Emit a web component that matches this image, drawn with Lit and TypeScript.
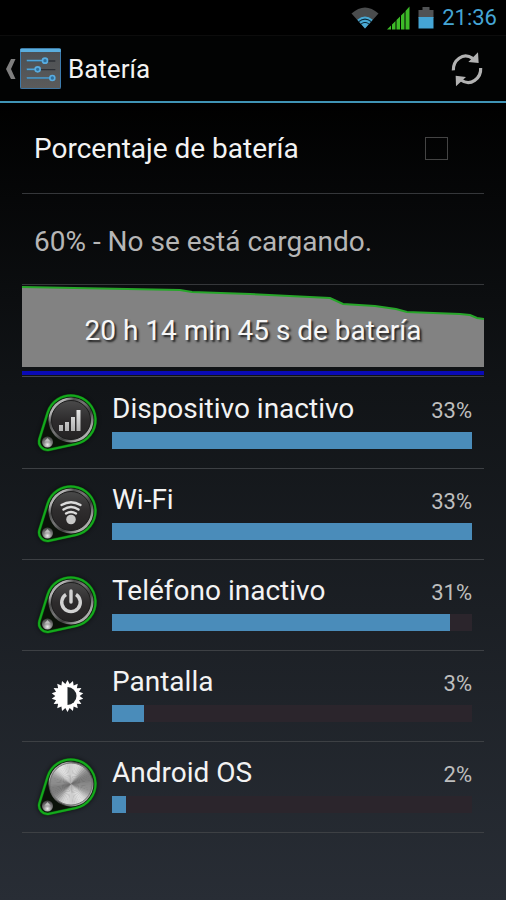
import { LitElement, html, svg, css, type SVGTemplateResult } from "lit";
import { customElement, property } from "lit/decorators.js";

type Glyph = "signal" | "wifi" | "power" | "metal";

interface Usage {
  name: string;
  percent: number;
  fill: number;
  icon: Glyph | "brightness";
}

const USAGES: Usage[] = [
  { name: "Dispositivo inactivo", percent: 33, fill: 100, icon: "signal" },
  { name: "Wi-Fi", percent: 33, fill: 100, icon: "wifi" },
  { name: "Teléfono inactivo", percent: 31, fill: 94, icon: "power" },
  { name: "Pantalla", percent: 3, fill: 9, icon: "brightness" },
  { name: "Android OS", percent: 2, fill: 4, icon: "metal" },
];

/** Thin wedges whose brightness varies with the angle, like brushed steel. */
function brushedDisc(cx: number, cy: number, r: number): SVGTemplateResult[] {
  const count = 60;
  const step = (Math.PI * 2) / count;
  return Array.from({ length: count }, (_, i) => {
    const a = i * step;
    const b = a + step * 1.3;
    const shine = Math.pow(Math.abs(Math.sin(a + 0.25)), 1.2);
    const ripple = Math.cos(a * 6 + 1) * 14;
    const v = Math.round(112 + shine * 108 + ripple);
    const d = `M${cx} ${cy}L${cx + r * Math.cos(a)} ${cy + r * Math.sin(a)}A${r} ${r} 0 0 1 ${cx + r * Math.cos(b)} ${cy + r * Math.sin(b)}Z`;
    return svg`<path d=${d} fill="rgb(${v},${v},${v})" />`;
  });
}

function toothedDisc(cx: number, cy: number, inner: number, outer: number, teeth: number): string {
  const pts: string[] = [];
  for (let i = 0; i < teeth * 2; i++) {
    const a = (i * Math.PI) / teeth - Math.PI / 2;
    const r = i % 2 ? inner : outer;
    pts.push(`${(cx + r * Math.cos(a)).toFixed(2)},${(cy + r * Math.sin(a)).toFixed(2)}`);
  }
  return pts.join(" ");
}

@customElement("usage-icon")
class UsageIcon extends LitElement {
  @property() kind: Usage["icon"] = "signal";

  static styles = css`
    :host {
      display: block;
      width: 60px;
      height: 60px;
    }
    .art {
      display: block;
      width: 100%;
      height: 100%;
      overflow: visible;
    }
  `;

  private glyph() {
    switch (this.kind) {
      case "signal":
        return svg`<path fill="url(#glyph)" d="M21 32h4v6h-4zM27 29h4v9h-4zM33 24h4v14h-4zM38.500 17h4v21h-4z" />`;
      case "wifi":
        return svg`
          <circle cx="33" cy="35.500" r="4.800" fill="#c8c8c8" />
          <g fill="none" stroke="#dcdcdc" stroke-width="2.400" stroke-linecap="round">
            <path d="M23.500 21Q33 15.500 42.500 21" />
            <path d="M25.500 25.500Q33 20.500 40.500 25.500" />
            <path d="M28 29.500Q33 26.500 38 29.500" />
          </g>`;
      case "power":
        return svg`
          <g fill="none" stroke="#d2d2d2" stroke-width="3.400">
            <path d="M28 19.500A9.300 9.300 0 1 0 38 19.500" />
            <path d="M33 16V27" stroke-linecap="round" />
          </g>`;
      default:
        return svg`${brushedDisc(33, 27, 21)}<circle cx="33" cy="27" r="21" fill="none" stroke="#777" stroke-width="1" />`;
    }
  }

  render() {
    if (this.kind === "brightness") {
      return html`<svg class="art" viewBox="0 0 60 60" aria-hidden="true">
        <polygon points=${toothedDisc(29.5, 30, 12.2, 16, 18)} fill="#fff" />
        <path d="M29.500 21A9 9 0 0 1 29.500 39Z" fill="#20262a" />
      </svg>`;
    }
    return html`<svg class="art" viewBox="0 0 60 60" aria-hidden="true">
      <defs>
        <linearGradient id="ring" x1="0" y1="0" x2="1" y2="1">
          <stop offset="0" stop-color="#8c8c8c" />
          <stop offset="0.2" stop-color="#b4b4b4" />
          <stop offset="0.3" stop-color="#4c4c4c" />
          <stop offset="0.45" stop-color="#777" />
          <stop offset="0.62" stop-color="#3c3c3c" />
          <stop offset="0.8" stop-color="#a8a8a8" />
          <stop offset="1" stop-color="#c0c0c0" />
        </linearGradient>
        <linearGradient id="face" x1="0" y1="0" x2="0" y2="1">
          <stop offset="0" stop-color="#4a4a4a" />
          <stop offset="0.5" stop-color="#2e2c2d" />
          <stop offset="1" stop-color="#242223" />
        </linearGradient>
        <linearGradient id="glyph" x1="0" y1="0" x2="0" y2="1">
          <stop offset="0" stop-color="#e6e6e6" />
          <stop offset="1" stop-color="#b0b0b0" />
        </linearGradient>
        <radialGradient id="bead" cx="0.5" cy="0.75" r="0.7">
          <stop offset="0" stop-color="#f0f0f0" />
          <stop offset="0.5" stop-color="#8a8a8a" />
          <stop offset="1" stop-color="#444" />
        </radialGradient>
        <filter id="soft" x="-20%" y="-20%" width="140%" height="140%">
          <feGaussianBlur stdDeviation="2" />
        </filter>
      </defs>
      <path
        d="M9.600 19.700A24.500 24.500 0 1 1 38.200 50.900L11.300 56.800A8.500 8.500 0 0 1 1.400 46Z"
        fill="#000"
        opacity="0.6"
        filter="url(#soft)"
        stroke="#000"
        stroke-width="3"
      />
      <path
        d="M9.600 19.700A24.500 24.500 0 1 1 38.200 50.900L11.300 56.800A8.500 8.500 0 0 1 1.400 46Z"
        fill="#0b1209"
        stroke="#0d5a12"
        stroke-width="3"
      />
      <path
        d="M9.600 19.700A24.500 24.500 0 1 1 38.200 50.900L11.300 56.800A8.500 8.500 0 0 1 1.400 46Z"
        fill="none"
        stroke="#14aa1c"
        stroke-width="2"
      />
      <circle cx="33" cy="27" r="22.500" fill="url(#ring)" />
      <circle cx="33" cy="27" r="19.500" fill="url(#face)" stroke="#1c1c1c" stroke-width="1" />
      ${this.glyph()}
      <circle cx="9.500" cy="49" r="5.500" fill="url(#bead)" />
      <path d="M6.500 48.500H12.500L9.500 45Z" fill="#d8d8d8" opacity="0.7" />
    </svg>`;
  }
}

@customElement("usage-row")
class UsageRow extends LitElement {
  @property({ attribute: false }) usage!: Usage;

  static styles = css`
    :host {
      display: flex;
      align-items: flex-start;
      box-sizing: border-box;
      height: 91px;
      padding: 15px 12px 0 16px;
      border-bottom: 1px solid #3d4044;
    }
    .body {
      flex: 1;
      margin-left: 14px;
    }
    .line {
      display: flex;
      justify-content: space-between;
      align-items: baseline;
      height: 32px;
      line-height: 32px;
    }
    .name {
      font-size: 28px;
      color: #f3f3f3;
    }
    .percent {
      font-size: 22px;
      color: #bebebe;
    }
    .track {
      height: 17px;
      margin-top: 7px;
      background: #2b252c;
    }
    .fill {
      height: 100%;
      background: #4a8cba;
    }
  `;

  render() {
    const u = this.usage;
    return html`
      <usage-icon kind=${u.icon}></usage-icon>
      <div class="body">
        <div class="line">
          <span class="name">${u.name}</span>
          <span class="percent">${u.percent}%</span>
        </div>
        <div class="track"><div class="fill" style="width:${u.fill}%"></div></div>
      </div>
    `;
  }
}

@customElement("app-root")
class AppRoot extends LitElement {
  static styles = css`
    :host {
      display: block;
      box-sizing: border-box;
      min-height: 100vh;
      background: linear-gradient(#000 0, #000 11%, #111417 43%, #282d35 100%);
      color: #f3f3f3;
      font-family: Roboto, "Noto Sans", sans-serif;
    }
    .status {
      display: flex;
      justify-content: flex-end;
      align-items: center;
      box-sizing: border-box;
      height: 36px;
      padding-right: 9px;
      background: #000;
      border-bottom: 1px solid #0c0c0c;
    }
    .status svg {
      display: block;
      margin-right: 8px;
    }
    .clock {
      font-size: 22px;
      color: #45a5d5;
    }
    .header {
      display: flex;
      justify-content: space-between;
      align-items: center;
      box-sizing: border-box;
      height: 67px;
      padding: 0 22px 0 5px;
      background: #020303;
      border-bottom: 2px solid #3f93b5;
    }
    button {
      display: flex;
      align-items: center;
      padding: 0;
      border: 0;
      background: none;
      color: inherit;
      font: inherit;
    }
    h1 {
      margin: 0 0 0 7px;
      font-size: 26px;
      font-weight: 400;
    }
    .chevron {
      margin-right: 4px;
    }
    main {
      padding: 0 22px;
    }
    .item {
      display: flex;
      align-items: center;
      justify-content: space-between;
      box-sizing: border-box;
      height: 91px;
      padding: 0 36px 0 12px;
      border-bottom: 1px solid #35373a;
      font-size: 28px;
    }
    .muted {
      padding-top: 4px;
      color: #b6b6b6;
    }
    input {
      appearance: none;
      box-sizing: border-box;
      width: 23px;
      height: 23px;
      margin: 0;
      border: 1px solid #444;
      background: transparent;
    }
    .chart {
      display: grid;
      box-sizing: border-box;
      height: 92px;
      border-bottom: 1px solid #44464a;
    }
    .chart > * {
      grid-area: 1 / 1;
    }
    .plot {
      display: block;
      width: 100%;
      height: 91px;
    }
    .caption {
      align-self: center;
      text-align: center;
      font-size: 28px;
      color: #f6f6f6;
      text-shadow: 2px 2px 2px #222;
    }
    .list {
      padding-top: 1px;
    }
  `;

  render() {
    return html`
      <div class="status">
        <svg width="28" height="24" viewBox="0 0 28 24" aria-hidden="true">
          <path d="M0.500 7.500Q14 -4.500 27.500 7.500L14 22.500Z" fill="#4a4c4d" />
          <path d="M6.300 13.800Q14 7 21.700 13.800L14 22.500Z" fill="#49a9d4" />
          <path d="M7.800 15.600Q14 10.500 20.200 15.600" fill="none" stroke="#0b2a3a" stroke-width="1.200" />
          <path d="M10 18Q14 14.800 18 18" fill="none" stroke="#0b2a3a" stroke-width="1" />
        </svg>
        <svg width="23" height="24" viewBox="0 0 23 24" aria-hidden="true">
          <path
            d="M0 23.500L4 19.500V23.500ZM5 18.500L8.500 15V23.500H5ZM9.500 14L13 10.500V23.500H9.500ZM14 9.500L17.500 6V23.500H14ZM18.500 5L22.500 0.500V23.500H18.500Z"
            fill="#3dba28"
          />
        </svg>
        <svg width="16" height="24" viewBox="0 0 16 24" aria-hidden="true">
          <path d="M4.500 1H11.500V4H15.500V12H0.500V4H4.500Z" fill="#505254" />
          <path d="M0.500 11H15.500V22.500H0.500Z" fill="#45a5d5" />
        </svg>
        <span class="clock">21:36</span>
      </div>
      <header class="header">
        <button type="button">
          <svg class="chevron" width="11" height="22" viewBox="0 0 11 22" aria-hidden="true">
            <path d="M6 1H10.500L6 11L10.500 21H6L1 11Z" fill="#7e7e7e" />
          </svg>
          <svg width="41" height="41" viewBox="60 55 123 123" aria-hidden="true">
            <defs>
              <linearGradient id="tile" x1="0" y1="0" x2="0" y2="1">
                <stop offset="0" stop-color="#4b4f53" />
                <stop offset="1" stop-color="#5b5b5b" />
              </linearGradient>
            </defs>
            <rect x="61.500" y="57" width="120" height="120" rx="3" fill="url(#tile)" stroke="#3d7cae" stroke-width="3" />
            <path d="M61 57H182V67H61Z" fill="#5aaede" />
            <g stroke-width="4" stroke="#2c3036">
              <path d="M80 94H166M80 120H166M80 146H166" />
            </g>
            <g stroke-width="5" stroke="#4da3d8">
              <path d="M80 93H130M80 119H108M80 145H152" />
            </g>
            <g fill="#2f6f9c" stroke="#58ace0" stroke-width="5">
              <circle cx="135" cy="93" r="7.500" />
              <circle cx="113" cy="119" r="7.500" />
              <circle cx="157" cy="145" r="7.500" />
            </g>
          </svg>
          <h1>Batería</h1>
        </button>
        <button type="button" aria-label="Actualizar">
          <svg width="34" height="36" viewBox="90 33 102 108" aria-hidden="true">
            <g fill="none" stroke="#b2b2b2" stroke-width="9.500">
              <path d="M100 91C99 62 128 35 158 55" />
              <path d="M182 84C184 114 152 141 123 120" />
            </g>
            <path d="M174 37L176 69L145 66Z M107 107L138 111L108 139Z" fill="#b2b2b2" />
          </svg>
        </button>
      </header>
      <main>
        <div class="item">
          <label for="show-percent">Porcentaje de batería</label>
          <input id="show-percent" type="checkbox" />
        </div>
        <div class="item muted">60% - No se está cargando.</div>
        <div class="chart">
          <svg class="plot" viewBox="0 0 462 91" preserveAspectRatio="none" aria-hidden="true">
            <path
              d="M0 2L158 5L170 7L228 9L308 13L321 19L353 21L374 24L385 27L438 29L448 30L455 33L462 34V82H0Z"
              fill="#828282"
            />
            <path
              d="M0 2L158 5L170 7L228 9L308 13L321 19L353 21L374 24L385 27L438 29L448 30L455 33L462 34"
              fill="none"
              stroke="#27a62a"
              stroke-width="2"
            />
            <path d="M0 86H462V90H0Z" fill="#0a0ab4" />
          </svg>
          <div class="caption">20 h 14 min 45 s de batería</div>
        </div>
        <div class="list">${USAGES.map((u) => html`<usage-row .usage=${u}></usage-row>`)}</div>
      </main>
    `;
  }
}
